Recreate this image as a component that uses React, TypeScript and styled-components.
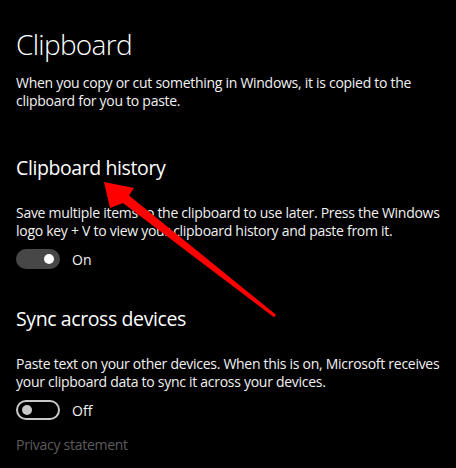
import React from "react";
import styled, { createGlobalStyle } from "styled-components";

const Global = createGlobalStyle`
  html, body { margin: 0; padding: 0; background: #000; }
  body { font-family: "Open Sans", "Noto Sans", sans-serif; }
`;

const Page = styled.div`
  position: relative;
  width: 456px;
  height: 468px;
  overflow: hidden;
  background: #000;
  color: #fff;
  padding: 26px 8px 0 16px;
  box-sizing: border-box;
  display: flex;
  flex-direction: column;
`;

const Title = styled.h1`
  margin: 0;
  font-size: 28px;
  line-height: 36px;
  font-weight: 300;
  letter-spacing: -0.7px;
`;

const SectionTitle = styled.h2<{ $gap: number }>`
  margin: ${(p) => p.$gap}px 0 0;
  font-size: 19.5px;
  line-height: 28px;
  font-weight: 400;
  letter-spacing: -0.4px;
`;

const Text = styled.p<{ $gap: number }>`
  margin: ${(p) => p.$gap}px 0 0;
  font-size: 14px;
  line-height: 18px;
  letter-spacing: -0.28px;
  color: #f2f2f2;
`;

const ToggleRow = styled.div`
  display: flex;
  align-items: center;
  gap: 12px;
  margin-top: 9px;
  height: 20px;
`;

const Track = styled.div<{ $on: boolean }>`
  width: 44px;
  height: 20px;
  box-sizing: border-box;
  border-radius: 10px;
  display: flex;
  align-items: center;
  padding: 0 4px;
  justify-content: ${(p) => (p.$on ? "flex-end" : "flex-start")};
  background: ${(p) => (p.$on ? "#474747" : "transparent")};
  border: 2px solid ${(p) => (p.$on ? "#474747" : "#c8c8c8")};
`;

const Knob = styled.div<{ $on: boolean }>`
  width: 10px;
  height: 10px;
  border-radius: 50%;
  background: ${(p) => (p.$on ? "#fff" : "#c8c8c8")};
`;

const ToggleLabel = styled.span`
  font-size: 14px;
  color: #f2f2f2;
`;

const Link = styled.a`
  margin-top: 16px;
  font-size: 14px;
  line-height: 18px;
  letter-spacing: -0.28px;
  color: #5c5c5c;
  text-decoration: none;
`;

const Arrow = styled.svg`
  position: absolute;
  left: 0;
  top: 0;
  pointer-events: none;
`;

function Toggle({ on, label }: { on: boolean; label: string }) {
  return (
    <ToggleRow>
      <Track $on={on}>
        <Knob $on={on} />
      </Track>
      <ToggleLabel>{label}</ToggleLabel>
    </ToggleRow>
  );
}

export default function App() {
  return (
    <>
      <Global />
      <Page>
        <Title>Clipboard</Title>
        <Text $gap={12}>
          When you copy or cut something in Windows, it is copied to the clipboard for you to paste.
        </Text>
        <SectionTitle $gap={44}>Clipboard history</SectionTitle>
        <Text $gap={22}>
          Save multiple items to the clipboard to use later. Press the Windows logo key + V to view your clipboard history and paste from it.
        </Text>
        <Toggle on label="On" />
        <SectionTitle $gap={36}>Sync across devices</SectionTitle>
        <Text $gap={22}>
          Paste text on your other devices. When this is on, Microsoft receives your clipboard data to sync it across your devices.
        </Text>
        <Toggle on={false} label="Off" />
        <Link>Privacy statement</Link>
        <Arrow width="456" height="468" viewBox="0 0 456 468">
          <polygon
            fill="#ff0000"
            points="104,182 134,188 129,195.5 276,314.8 274,317.2 123,203 110,208"
          />
        </Arrow>
      </Page>
    </>
  );
}
